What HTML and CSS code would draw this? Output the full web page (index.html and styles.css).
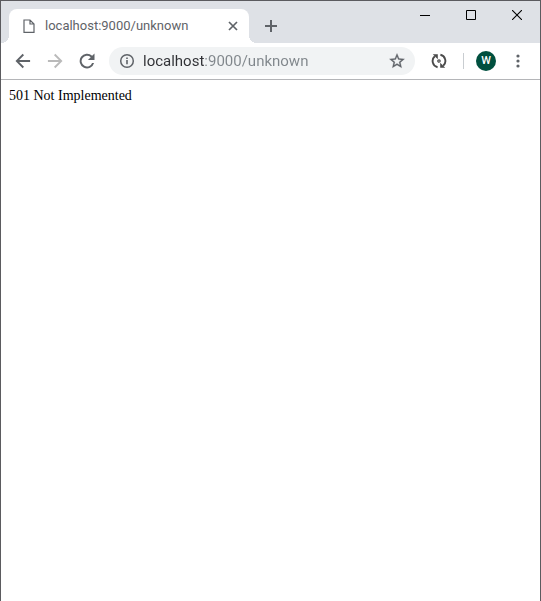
FILE: index.html
```html
<!DOCTYPE html>
<html lang="en">
<head>
<meta charset="utf-8">
<meta name="viewport" content="width=device-width, initial-scale=1">
<title>localhost:9000/unknown</title>
<link rel="stylesheet" href="styles.css">
</head>
<body>
<div class="window">
  <header class="tabstrip">
    <div class="tab">
      <svg class="page-icon" width="12" height="14" viewBox="0 0 12 14" fill="none" stroke="#5f6368" stroke-width="1.2"><path d="M1 1h6l4 4v8.4H1zM7 1v4h4"/></svg>
      <span class="tab-title">localhost:9000/unknown</span>
      <button class="plain tab-close" aria-label="Close tab"><svg width="10" height="10" viewBox="0 0 10 10" fill="none" stroke="#5f6368" stroke-width="1.7"><path d="M1 1l8 8M9 1l-8 8"/></svg></button>
    </div>
    <button class="plain new-tab" aria-label="New tab"><svg width="12" height="12" viewBox="0 0 12 12" fill="none" stroke="#5f6368" stroke-width="2"><path d="M6 0v12M0 6h12"/></svg></button>
    <div class="controls">
      <button class="plain control" aria-label="Minimize"><svg width="10" height="10" viewBox="0 0 10 10"><path d="M0 5h10v1H0z"/></svg></button>
      <button class="plain control" aria-label="Maximize"><svg width="10" height="10" viewBox="0 0 10 10" fill="none" stroke="#000"><path d="M.5.5h9v9h-9z"/></svg></button>
      <button class="plain control" aria-label="Close"><svg width="10" height="10" viewBox="0 0 10 10" fill="none" stroke="#000" stroke-width="1.1"><path d="M0 0l10 10M10 0L0 10"/></svg></button>
    </div>
  </header>
  <nav class="toolbar">
    <button class="plain tool" aria-label="Back"><svg width="20" height="20" viewBox="0 0 24 24" fill="#5f6368"><path d="M20.5 10.8H7.4l5.8-5.8L11.6 3.4 3 12l8.6 8.6 1.6-1.6-5.8-5.8h13.1z"/></svg></button>
    <button class="plain tool" aria-label="Forward"><svg width="20" height="20" viewBox="0 0 24 24" fill="#bababa"><path d="M3.5 10.8h13.1L10.8 5l1.6-1.6L21 12l-8.6 8.6-1.6-1.6 5.8-5.8H3.5z"/></svg></button>
    <button class="plain tool" aria-label="Reload"><svg width="20" height="20" viewBox="0 0 24 24" fill="#5f6368"><path d="M18.2 5.8A8.8 8.8 0 1 0 20.5 14.4h-2.4A6.5 6.5 0 1 1 16.5 7.4L13.1 10.8H21V2.9z"/></svg></button>
    <div class="omnibox">
      <button class="plain" aria-label="Site information"><svg class="info" width="16" height="16" viewBox="0 0 16 16"><circle cx="8" cy="8" r="6.3" fill="none" stroke="#5f6368" stroke-width="1.5"/><path fill="#5f6368" d="M7.2 7h1.6v4.3H7.2zM7.2 4.6h1.6v1.5H7.2z"/></svg></button>
      <input class="url" type="text" aria-label="Address" value="localhost:9000/unknown" spellcheck="false">
      <button class="plain" aria-label="Bookmark"><svg class="star" width="18" height="18" viewBox="0 0 24 24" fill="#5f6368" stroke="#5f6368" stroke-width=".4"><path d="M22 9.24l-7.19-.62L12 2 9.19 8.63 2 9.24l5.46 4.73L5.82 21 12 17.27 18.18 21l-1.63-7.03zM12 15.4l-3.76 2.27 1-4.28-3.32-2.88 4.38-.38L12 6.1l1.71 4.04 4.38.38-3.32 2.88 1 4.28z"/></svg></button>
    </div>
    <button class="plain extension" aria-label="Extension"><svg width="16" height="16" viewBox="0 0 16 16" fill="none" stroke="#4a4a4a" stroke-width="1.9"><path d="M6.600 14.200A6.300 6.300 0 0 1 3.800 3.300M9.400 1.800A6.300 6.300 0 0 1 12.200 12.700"/><path d="M1.800 1.200H6.800V6.200zM14.200 14.800H9.200V9.800z" fill="#4a4a4a" stroke="none"/><circle cx="8" cy="8" r="1.200" stroke-width="1.200"/></svg></button>
    <span class="divider"></span>
    <button class="plain avatar" aria-label="Profile">W</button>
    <button class="plain menu" aria-label="Menu"><svg width="4" height="14" viewBox="0 0 4 14" fill="#5f6368"><circle cx="2" cy="2" r="1.600"/><circle cx="2" cy="7" r="1.600"/><circle cx="2" cy="12" r="1.600"/></svg></button>
  </nav>
  <main class="page">501 Not Implemented</main>
</div>
</body>
</html>
```
FILE: styles.css
```css
* {
  box-sizing: border-box;
}

body {
  margin: 0;
  background: #fff;
  font-family: Roboto, "Open Sans", sans-serif;
}

svg {
  display: block;
}

.plain {
  display: flex;
  align-items: center;
  justify-content: center;
  flex: none;
  padding: 0;
  border: 0;
  background: none;
}

.window {
  display: flex;
  flex-direction: column;
  min-height: 100vh;
  border: 1px solid #5b5b5f;
  border-bottom: 0;
}

.tabstrip {
  display: flex;
  height: 42px;
  padding-left: 8px;
  background: #dee1e6;
}

.tab {
  position: relative;
  display: flex;
  align-items: center;
  flex: 0 1 240px;
  margin-top: 8px;
  padding: 0 10px 0 14px;
  border-radius: 8px 8px 0 0;
  background: #fff;
}

.tab::before,
.tab::after {
  content: "";
  position: absolute;
  bottom: 0;
  width: 8px;
  height: 8px;
}

.tab::before {
  left: -8px;
  background: radial-gradient(circle at 0 0, #dee1e6 8px, #fff 8px);
}

.tab::after {
  right: -8px;
  background: radial-gradient(circle at 100% 0, #dee1e6 8px, #fff 8px);
}

.tab-title {
  flex: 1;
  margin-left: 10px;
  color: #5f6368;
  font-size: 13px;
  line-height: 16px;
  white-space: nowrap;
}

.tab-close {
  width: 12px;
  height: 16px;
}

.new-tab {
  width: 28px;
  height: 28px;
  margin: 11px 0 0 8px;
}

.controls {
  display: flex;
  margin-left: auto;
}

.control {
  width: 46px;
  height: 28px;
}

.toolbar {
  display: flex;
  align-items: center;
  height: 37px;
  padding: 0 12px;
  border-bottom: 1px solid #b4b5b8;
}

.tool {
  width: 20px;
  height: 28px;
  margin-right: 12px;
}

.omnibox {
  display: flex;
  align-items: center;
  flex: 1;
  min-width: 0;
  height: 28px;
  padding: 0 9px 0 10px;
  border-radius: 14px;
  background: #f1f3f4;
}

.url {
  flex: 1;
  min-width: 0;
  margin: 0 8px;
  padding: 0;
  border: 0;
  outline: 0;
  background: linear-gradient(90deg, #303135 61px, #80868b 61px);
  background-clip: text;
  color: transparent;
  font-family: inherit;
  font-size: 15px;
  line-height: 20px;
}

.extension {
  width: 16px;
  margin: 0 16px;
}

.divider {
  width: 1px;
  height: 16px;
  background: #c9cdd1;
}

.avatar {
  width: 20px;
  height: 20px;
  margin-left: 12px;
  border-radius: 50%;
  background: #00503f;
  color: #fff;
  font: 500 11px/20px Roboto, sans-serif;
}

.menu {
  width: 20px;
  height: 28px;
  margin-left: 12px;
}

.page {
  flex: 1;
  padding: 8px;
  color: #000;
  font: 14px/16px "Liberation Serif", serif;
}
```
